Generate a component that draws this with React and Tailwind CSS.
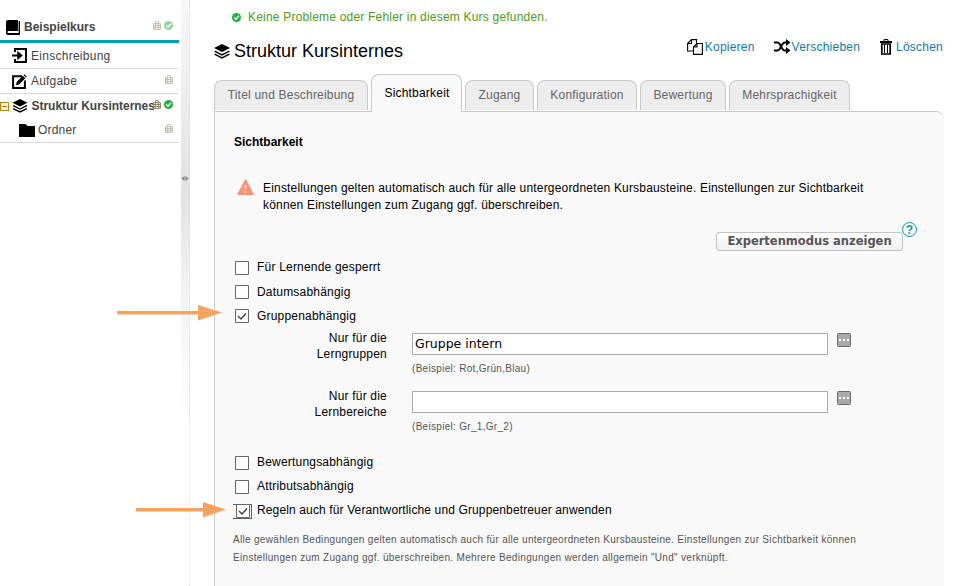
const tabs = [
  { title: "Titel und Beschreibung", size: "w-[154px]" },
  { title: "Sichtbarkeit", size: "w-[91px]", active: true },
  { title: "Zugang", size: "w-[69px]" },
  { title: "Konfiguration", size: "w-[100px]" },
  { title: "Bewertung", size: "w-[86px]" },
  { title: "Mehrsprachigkeit", size: "w-[121px]" },
];

function Layers({ className }) {
  return (
    <svg viewBox="0 0 16 15" className={className}>
      <path d="M8 0 16 4 8 8 0 4Z" fill="#000" />
      <path d="M0.6 7.2 8 10.8 15.4 7.2M0.6 10.2 8 13.8 15.4 10.2" fill="none" stroke="#000" strokeWidth="1.5" />
    </svg>
  );
}

function Book() {
  return (
    <svg viewBox="0 0 14 15" className="w-[14px] h-[15px]">
      <path d="M2 0H12V11H2.2C1.2 11 1.2 13 2.2 13H12.6V1H14V15H2C.6 15 0 14 0 13V2C0 .8.8 0 2 0Z" fill="#000" />
      <path d="M2.5 12.2H12.5" stroke="#fff" strokeWidth="1" />
    </svg>
  );
}

function Enter() {
  return (
    <svg viewBox="0 0 15 15" className="w-[15px] h-[15px]" fill="none" stroke="#000" strokeWidth="2">
      <path d="M3 4V1H14V14H3V11" />
      <path d="M0 7.5H8" />
      <path d="M5.5 3.2 10.5 7.5 5.5 11.8Z" fill="#000" strokeWidth="0.5" />
    </svg>
  );
}

function Edit() {
  return (
    <svg viewBox="0 0 15 15" className="w-[15px] h-[15px]">
      <path d="M10 2.2H1.1V13.9H12.9V6.5" fill="none" stroke="#000" strokeWidth="2" />
      <path d="M4 11.3 4.7 8 10.8 1.8 13.3 4.3 7.2 10.5ZM11.5 1.1 12.4.2 14.9 2.7 14 3.6Z" fill="#000" />
    </svg>
  );
}

function Folder() {
  return (
    <svg viewBox="0 0 16 13" className="w-4 h-[13px]">
      <path d="M0 0H6.5L8.5 2H16V13H0Z" fill="#000" />
    </svg>
  );
}

function Case({ faded }) {
  return (
    <svg viewBox="0 0 8 9" className={faded ? "w-2 h-[9px] opacity-50" : "w-2 h-[9px]"}>
      <path d="M.5 2.5H7.5V8.5H.5Z" fill="#efe6d3" />
      <path d="M2.5 2.5V.6H5.5V2.5M.5 2.5H7.5V8.5H.5ZM0 4.5H8M0 6.5H8M2.5 3V8.5M5.5 3V8.5" fill="none" stroke="#85755a" strokeWidth="0.8" />
    </svg>
  );
}

function Check({ faded }) {
  return (
    <svg viewBox="0 0 9 9" className={faded ? "w-[9px] h-[9px] opacity-50" : "w-[9px] h-[9px]"}>
      <circle cx="4.5" cy="4.5" r="4.5" fill="#1fb141" />
      <path d="M2.2 4.5 4 6.2 7 2.8" fill="none" stroke="#fff" strokeWidth="1.4" />
    </svg>
  );
}

function Badges({ faded, done }) {
  return (
    <span className="absolute right-[6px] -top-[2px] h-full flex items-center gap-[3px]">
      <Case faded={faded} />
      {done && <Check faded={faded} />}
    </span>
  );
}

function Box({ checked }) {
  return (
    <svg viewBox="0 0 14 14" className="w-[14px] h-[14px] shrink-0">
      <path d="M.5 .5H13.5V13.5H.5Z" fill="#fff" stroke="#666" />
      {checked && <path d="M3 7 6 10 11 4.5" fill="none" stroke="#444" strokeWidth="1.5" />}
    </svg>
  );
}

function Option({ label, checked, low }) {
  return (
    <label className="flex items-center gap-2 h-6 pl-[21px]">
      <Box checked={checked} />
      <span className={low ? "" : "relative -top-px"}>{label}</span>
    </label>
  );
}

function Field({ line1, line2, value, hint }) {
  return (
    <div className="flex h-[58px]">
      <div className="w-[172px] text-right leading-4 -mt-[3px]">
        {line1}
        <br />
        {line2}
      </div>
      <div className="ml-[25px]">
        <div className="w-[416px] h-[22px] border border-[#a9a9a9] bg-white px-[2px] leading-[19px] text-[12.5px] tracking-normal font-['DejaVu_Sans',sans-serif]">
          {value}
        </div>
        <div className="mt-[5px] text-[10px] leading-[18px] tracking-[0.3px] text-[#555]">{hint}</div>
      </div>
      <svg viewBox="0 0 14 14" className="w-[14px] h-[14px] ml-[9px]">
        <rect x=".5" y=".5" width="13" height="13" rx="1" fill="#aaa" stroke="#6b6b6b" />
        <path d="M2 6H4V8H2ZM6 6H8V8H6ZM10 6H12V8H10Z" fill="#fff" />
      </svg>
    </div>
  );
}

function Sidebar() {
  return (
    <nav className="w-[179px] shrink-0 pt-[13px] text-[#444]">
      <div className="relative flex items-center h-[30px] pt-px pl-[6px] gap-1 border-b-[3px] border-[#0698bd] font-bold tracking-normal">
        <Book />
        <span>Beispielkurs</span>
        <span className="absolute right-[6px] top-[8px] flex gap-[3px]">
          <Case faded />
          <Check faded />
        </span>
      </div>
      <div className="flex items-center h-[26px] pl-3 gap-1 border-b border-[#d9d9d9] tracking-[0.27px]">
        <Enter />
        <span>Einschreibung</span>
      </div>
      <div className="relative flex items-center h-[25px] pl-3 gap-1 border-b border-[#d9d9d9]">
        <Edit />
        <span>Aufgabe</span>
        <Badges faded />
      </div>
      <div className="relative flex items-center h-6 font-bold tracking-[-0.03px] whitespace-nowrap">
        <svg viewBox="0 0 9 9" className="w-[9px] h-[9px] mr-[3px] shrink-0" fill="none" stroke="#bd7b16">
          <path d="M.5 .5H8.5V8.5H.5Z" fill="#fff5e3" />
          <path d="M2 4.5H7" />
        </svg>
        <Layers className="w-4 h-[14px] shrink-0" />
        <span className="ml-[3.5px] pb-px">Struktur Kursinternes</span>
        <Badges done />
      </div>
      <div className="relative flex items-center h-[25px] pl-[19px] gap-[3px] border-b border-[#d9d9d9]">
        <Folder />
        <span>Ordner</span>
        <Badges faded />
      </div>
    </nav>
  );
}

function Actions() {
  return (
    <div className="flex items-center text-[#0a7ea4] tracking-[0.22px]">
      <svg viewBox="0 0 16 16" className="w-4 h-4 mr-[2px]" fill="#fff" stroke="#000" strokeWidth="1.1">
        <path d="M.6 4.5 4.5.6H9.5V12H.6ZM4.5.6V4.5H.6" />
        <path d="M6.5 8 10 4.5H15.4V15.4H6.5ZM10 4.5V8H6.5" />
      </svg>
      <span>Kopieren</span>
      <svg viewBox="0 0 17 15" className="w-[17px] h-[15px] ml-[19px] mr-px" fill="none" stroke="#000" strokeWidth="2">
        <path d="M0 3.5H3.5C7 3.5 7 11.5 11 11.5H13M0 11.5H3.5C7 11.5 7 3.5 11 3.5H13" />
        <path d="M12 0 16.5 3.5 12 7ZM12 8 16.5 11.5 12 15Z" fill="#000" stroke="none" />
      </svg>
      <span>Verschieben</span>
      <svg viewBox="0 0 12 16" className="w-3 h-4 ml-5 mr-1" fill="none" stroke="#000">
        <path d="M4 2V.6H8V2" />
        <path d="M0 3H12" strokeWidth="2" />
        <path d="M1.8 5V15H10.2V5Z" strokeWidth="1.7" />
        <path d="M4.5 6V14M7.5 6V14" />
      </svg>
      <span>Löschen</span>
    </div>
  );
}

export default function App() {
  return (
    <div className="relative flex w-[963px] h-[586px] overflow-hidden bg-white font-['Liberation_Sans',sans-serif] text-xs tracking-[0.2px] text-black">
      <Sidebar />

      {/* Splitter */}
      <div className="w-[11px] shrink-0 pl-[2px]">
        <div className="w-[9px] h-full border-r border-dotted border-[#ddd] bg-[linear-gradient(#f8f8f8,#ebebeb_120px,#e2e2e2_190px,#f2f2f2_280px,#fff_420px)]">
          <svg viewBox="0 0 9 6" className="w-2 h-[5px] relative top-[176px]" fill="#888">
            <path d="M4 0V6L0 3ZM5 0V6L9 3Z" />
          </svg>
        </div>
      </div>

      <main className="w-[754px] pl-6 shrink-0">
        <div className="flex items-center gap-[7px] h-[34px] pl-[18px] text-[#4b9d0b]">
          <Check />
          <span>Keine Probleme oder Fehler in diesem Kurs gefunden.</span>
        </div>
        <div className="flex items-center justify-between h-[40px] w-[729px]">
          <h1 className="flex items-center gap-1 text-lg leading-5 tracking-normal pb-[6px]">
            <Layers className="w-4 h-[15px]" />
            Struktur Kursinternes
          </h1>
          <div className="pb-[15px]"><Actions /></div>
        </div>

        <div className="relative flex items-end gap-[3px] h-[38px] w-[730px]">
          {tabs.map((tab) => (
            <div
              key={tab.title}
              className={`${tab.size} text-center border border-b-0 border-[#c8c8c8] rounded-t-[8px] ${
                tab.active
                  ? "h-[38px] leading-[36px] pl-px bg-[#f9f9f9]"
                  : "h-[30px] leading-[29px] mb-[2px] bg-[#ededed] text-[#666]"
              }`}
            >
              {tab.title}
            </div>
          ))}
        </div>

        <section className="w-[730px] h-[480px] -mt-px border-l border-t border-[#c8c8c8] rounded-tr-[8px] bg-[#f9f9f9] relative">
          {/* gap in the top border below the active tab */}
          <div className="absolute left-[157px] -top-px w-[89px] h-px bg-[#f9f9f9]" />
          <h2 className="pt-[22px] pl-[19px] leading-4 font-bold tracking-normal">Sichtbarkeit</h2>

          <div className="flex pt-[30px] pl-[22px] leading-[17px] tracking-[0.18px]">
            <svg viewBox="0 0 17 16" className="w-[17px] h-[16px] -mt-px mr-[9px]">
              <path d="M8.5 1 16 15.3H1Z" fill="#fc9272" stroke="#fc9272" strokeWidth="1.4" strokeLinejoin="round" />
              <path d="M8.5 6V10M8.5 12V13.5" stroke="#fff" strokeWidth="1.4" />
            </svg>
            <p>
              Einstellungen gelten automatisch auch für alle untergeordneten Kursbausteine. Einstellungen zur Sichtbarkeit
              <br />
              können Einstellungen zum Zugang ggf. überschreiben.
            </p>
          </div>

          <div className="flex pt-[7px] pl-[501px]">
            <div className="mt-[11px] w-[187px] h-[19px] border border-[#c3c3c3] rounded-[3px] bg-linear-to-b from-white to-[#f0f0f0] text-center leading-[17px] text-[11.5px] font-bold tracking-normal text-[#555] font-['DejaVu_Sans',sans-serif]">
              Expertenmodus anzeigen
            </div>
            <span className="-ml-px mt-px flex items-center justify-center w-[15px] h-[15px] border-[1.5px] border-[#0698bd] rounded-full text-xs leading-none font-bold tracking-normal text-[#0698bd]">
              ?
            </span>
          </div>

          <div className="pt-[5px] -ml-px">
            <Option label="Für Lernende gesperrt" />
            <Option label="Datumsabhängig" low />
            <Option label="Gruppenabhängig" checked low />
          </div>

          <div className="pt-[5px]">
            <Field line1="Nur für die" line2="Lerngruppen" value="Gruppe intern" hint="(Beispiel: Rot,Grün,Blau)" />
            <Field line1="Nur für die" line2="Lernbereiche" value="" hint="(Beispiel: Gr_1,Gr_2)" />
          </div>

          <div className="pt-[2px] -ml-px">
            <Option label="Bewertungsabhängig" />
            <Option label="Attributsabhängig" />
            <label className="flex items-center h-6 pl-[19px]">
              <span className="w-[19px] h-[15px] border border-l-0 border-[#4b6482] flex items-center pl-[3px]">
                <Box checked />
              </span>
              <span className="ml-[5px] relative -top-px tracking-[0.13px]">Regeln auch für Verantwortliche und Gruppenbetreuer anwenden</span>
            </label>
          </div>

          <p className="pt-[8px] pl-[18px] text-[10px] leading-[18px] tracking-[0.31px] text-[#555]">
            Alle gewählen Bedingungen gelten automatisch auch für alle untergeordneten Kursbausteine. Einstellungen zur Sichtbarkeit können
            <br />
            Einstellungen zum Zugang ggf. überschreiben. Mehrere Bedingungen werden allgemein "Und" verknüpft.
          </p>
        </section>
      </main>

      {/* Annotation arrows */}
      <svg viewBox="0 0 105 16" className="absolute left-[117px] top-[305px] w-[105px] h-4" fill="#f4a460">
        <path d="M0 6H81V0L105 7.5 81 15.5V9.5H0Z" />
      </svg>
      <svg viewBox="0 0 90 16" className="absolute left-[136px] top-[502px] w-[90px] h-4" fill="#f4a460">
        <path d="M0 6H67V0L90 7.5 67 15.5V9.5H0Z" />
      </svg>
    </div>
  );
}
